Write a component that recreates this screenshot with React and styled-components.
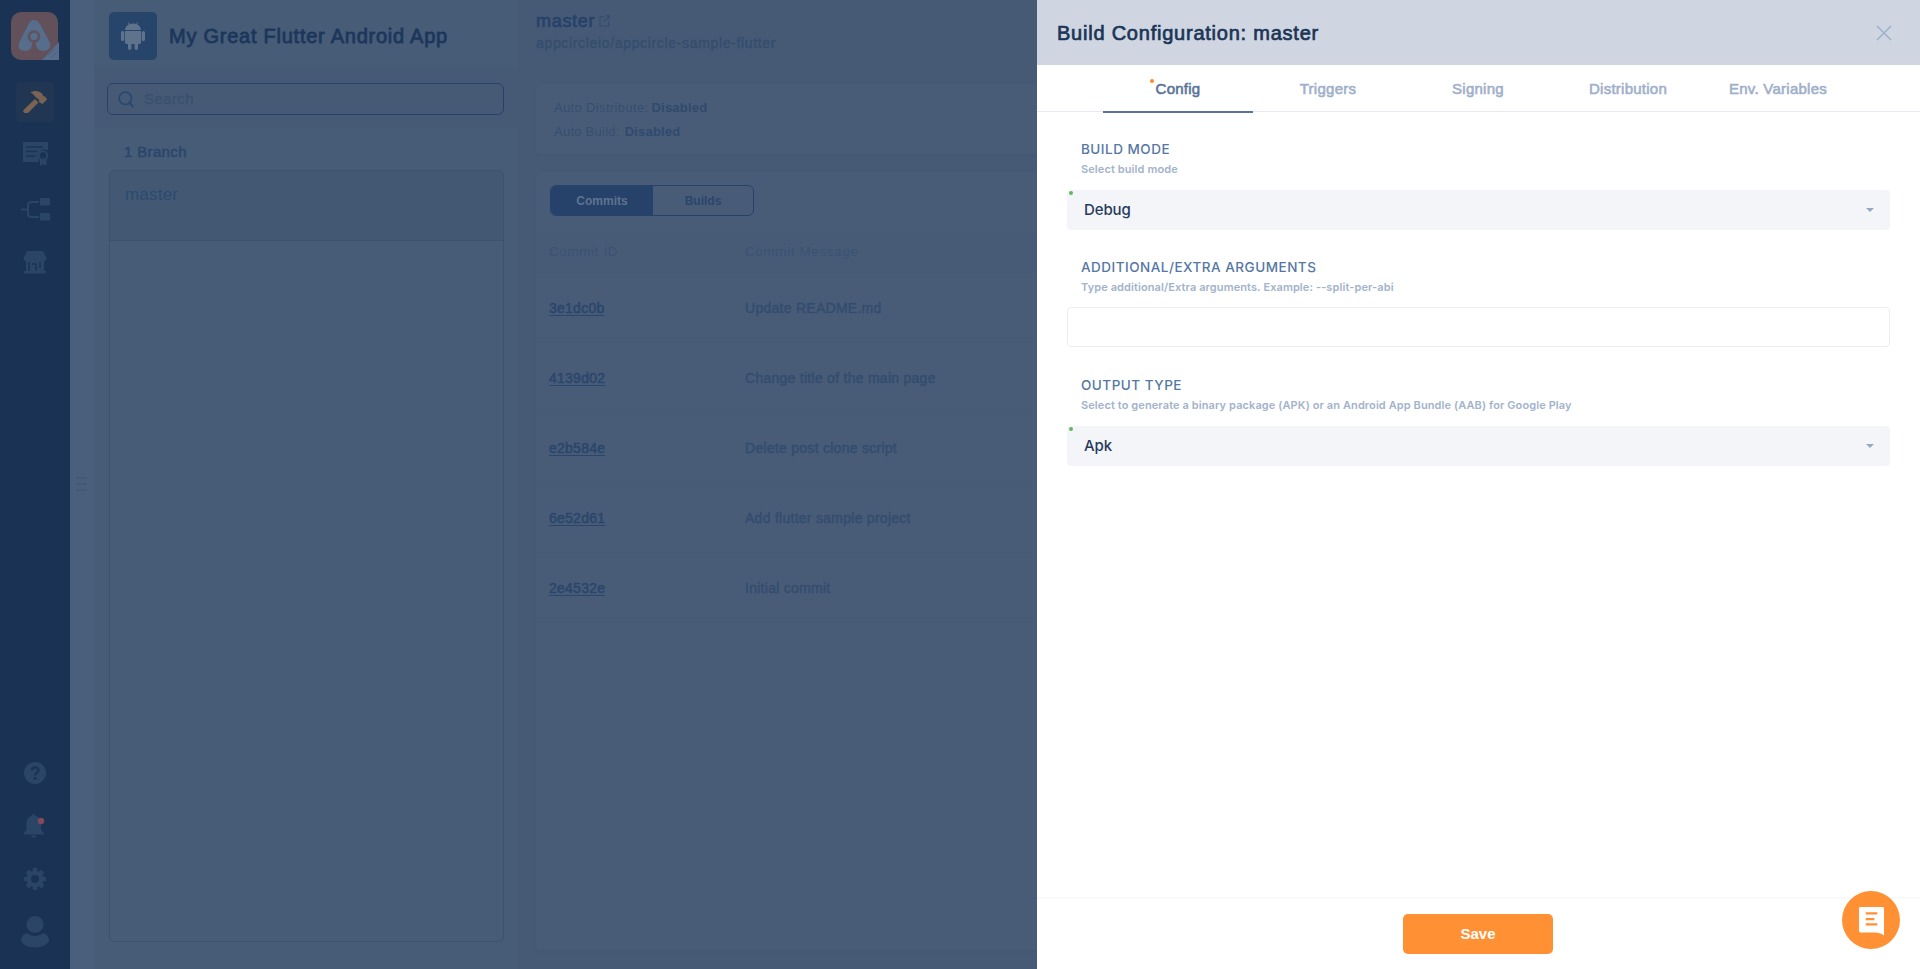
import React from "react";
import styled, { createGlobalStyle } from "styled-components";

const sans = `"Liberation Sans", Arial, sans-serif`;
const inter = `Inter, "Liberation Sans", sans-serif`;

const Global = createGlobalStyle`
  * { box-sizing: border-box; }
  body { margin: 0; overflow: hidden; font-family: ${sans}; background: #475b76; }
`;

const Page = styled.div`
  display: flex;
  width: 1920px;
  height: 969px;
  overflow: hidden;
`;

const Text = styled.span`
  font-family: ${(p) => p.$font || sans};
  font-size: ${(p) => p.$size}px;
  font-weight: ${(p) => p.$weight || 400};
  letter-spacing: ${(p) => p.$track || 0}px;
  color: ${(p) => p.$color};
  line-height: ${(p) => p.$line || 20}px;
  -webkit-text-stroke: ${(p) => p.$stroke || 0}px currentColor;
  white-space: nowrap;
`;

/* Sidebar */
const Sidebar = styled.nav`
  width: 70px;
  flex: none;
  display: flex;
  flex-direction: column;
  align-items: center;
  justify-content: space-between;
  padding: 12px 0 17px 2px;
  background: #1a3355;
  border-right: 2px solid #1c3052;
`;
const NavGroup = styled.div`
  display: flex;
  flex-direction: column;
  align-items: center;
`;
const NavItem = styled.div`
  display: flex;
  align-items: center;
  justify-content: center;
  width: 38px;
  height: ${(p) => p.$height || 40}px;
  margin-top: ${(p) => p.$gap || 0}px;
  border-radius: 4px;
  background: ${(p) => (p.$active ? "#203652" : "transparent")};
`;

const Gutter = styled.div`
  width: 24px;
  flex: none;
  display: flex;
  flex-direction: column;
  justify-content: center;
  align-items: center;
  gap: 4px;
  padding: 0 2px 2px 0;
  background: #4a5f7b;
`;
const Grip = styled.i`
  width: 11px;
  height: 2px;
  background: #445974;
`;

/* Branch panel */
const BranchPanel = styled.section`
  width: 425px;
  flex: none;
  display: flex;
  flex-direction: column;
  background: #475c77;
  box-shadow: inset -1px 0 0 #42577280;
`;
const AppHeader = styled.header`
  height: 68px;
  display: flex;
  align-items: center;
  gap: 12px;
  padding: 4px 15px 0;
`;
const AppIcon = styled.div`
  width: 48px;
  height: 48px;
  border-radius: 5px;
  display: flex;
  align-items: center;
  justify-content: center;
  background: #27456b;
`;
const SearchBand = styled.div`
  height: 60px;
  padding: 15px 15px 0 13px;
  background: #465a76;
`;
const SearchBox = styled.div`
  width: 397px;
  height: 32px;
  display: flex;
  align-items: center;
  gap: 10px;
  padding-left: 10px;
  border: 1px solid #26426a;
  border-radius: 6px;
`;
const BranchCount = styled.div`
  height: 42px;
  padding: 14px 0 0 30px;
`;
const BranchList = styled.div`
  width: 395px;
  height: 772px;
  margin-left: 15px;
  border: 1px solid #3d526e;
  border-radius: 5px;
  overflow: hidden;
`;
const BranchRow = styled.div`
  height: 70px;
  padding: 14px 15px;
  background: #435873;
  border-bottom: 1px solid #3c5270;
`;

/* Main area */
const Main = styled.main`
  width: 518px;
  flex: none;
  padding-left: 17px;
  background: #465a75;
`;
const RepoHeader = styled.header`
  height: 84px;
  display: flex;
  flex-direction: column;
  padding-top: 10px;
`;
const RepoTitle = styled.div`
  display: flex;
  align-items: center;
  gap: 4px;
  height: 22px;
`;
const Card = styled.div`
  height: ${(p) => p.$height}px;
  margin-bottom: 18px;
  background: #485c78;
  border-radius: 4px 0 0 4px;
  box-shadow: 0 1px 2px #42567160;
`;
const StatusList = styled.div`
  padding: 14px 18px;
  display: flex;
  flex-direction: column;
  gap: 4px;
`;
const StatusLine = styled.div`
  display: flex;
  height: 20px;
  gap: ${(p) => p.$gap}px;
`;
const ToggleBar = styled.div`
  height: 60px;
  padding: 13px 14px;
`;
const Toggle = styled.div`
  display: flex;
  width: 204px;
  height: 31px;
  border: 1px solid #26426a;
  border-radius: 6px;
  overflow: hidden;
`;
const ToggleItem = styled.div`
  flex: ${(p) => (p.$active ? "0 0 102px" : 1)};
  display: flex;
  align-items: center;
  justify-content: center;
  background: ${(p) => (p.$active ? "#26426a" : "transparent")};
`;
const TableRow = styled.div`
  display: grid;
  grid-template-columns: 196px 1fr;
  align-items: center;
  height: ${(p) => (p.$head ? 41 : 70)}px;
  padding-left: 13px;
  background: ${(p) => (p.$head ? "#475b77" : "transparent")};
  border-bottom: 1px solid #465a75;
`;
const CommitLink = styled(Text)`
  text-decoration: underline;
  text-decoration-thickness: 1px;
  text-underline-offset: 2px;
`;

/* Drawer */
const Drawer = styled.aside`
  width: 883px;
  flex: none;
  display: flex;
  flex-direction: column;
  background: #fff;
`;
const DrawerHeader = styled.header`
  height: 65px;
  flex: none;
  display: flex;
  align-items: center;
  justify-content: space-between;
  padding: 1px 28px 0 20px;
  background: #cfd6e2;
`;
const Tabs = styled.div`
  height: 47px;
  flex: none;
  display: flex;
  justify-content: center;
  padding-right: 1px;
  border-bottom: 1px solid #e7eaef;
`;
const Tab = styled.div`
  position: relative;
  width: 150px;
  height: 48px;
  display: flex;
  justify-content: center;
  padding-top: 14px;
  border-bottom: 2px solid ${(p) => (p.$active ? "#5a7499" : "transparent")};
`;
const Dot = styled.i`
  position: absolute;
  left: ${(p) => p.$left}px;
  top: ${(p) => p.$top}px;
  width: 4px;
  height: 4px;
  border-radius: 50%;
  background: ${(p) => p.$color};
`;
const Form = styled.div`
  flex: 1;
  padding: 27px 30px 0;
`;
const Field = styled.div`
  height: 118px;
`;
const FieldLabel = styled.div`
  display: flex;
  flex-direction: column;
  padding-left: 14px;
  height: 50px;
`;
const Control = styled.div`
  position: relative;
  height: 40px;
  margin-top: ${(p) => (p.$select ? 1 : 0)}px;
  display: flex;
  align-items: center;
  justify-content: space-between;
  padding: 0 16px 0 17px;
  border-radius: 4px;
  background: ${(p) => (p.$select ? "#f4f5f8" : "#fff")};
  border: ${(p) => (p.$select ? "0" : "1px solid #ebedf0")};
`;
const Footer = styled.footer`
  height: 72px;
  flex: none;
  display: flex;
  justify-content: center;
  padding: 15px 1px 0 0;
  border-top: 2px solid #f8f9fa;
`;
const SaveButton = styled.button`
  width: 150px;
  height: 40px;
  padding: 0;
  border: 0;
  border-radius: 5px;
  background: #ff9033;
`;
const ChatButton = styled.button`
  position: absolute;
  left: 1842px;
  top: 891px;
  width: 58px;
  height: 58px;
  padding: 2px 0 0;
  border: 0;
  border-radius: 50%;
  background: #ff9033;
  display: flex;
  align-items: center;
  justify-content: center;
`;

const nav = "#2b4567";
const mark = "#566e8b";
const tile = "#62505a";

const Logo = () => (
  <svg width="49" height="49" viewBox="0 0 49 49">
    <rect x="0" y="0" width="47" height="48" rx="10" fill={tile} />
    <path d="M31 48 48 30v18z" fill={mark} />
    <path d="m37 43 7-6M40 46l6-6" stroke="#4a6080" strokeWidth="1" />
    <path d="M23 8c3 0 5 2 6.500 5l9 17c2.500 5-1 9-6 9-3 0-5-1-6.500-3l-1.500-5h-3L20 36c-1.500 2-3.500 3-6 3-5 0-8-4-5.500-9l8.500-17c1.500-3 3-5 6-5z" fill={mark} />
    <circle cx="23" cy="24.500" r="5" fill={mark} stroke={tile} strokeWidth="2.600" />
    <path d="M23 29v11" stroke={tile} strokeWidth="2.600" />
  </svg>
);
const Hammer = () => (
  <svg width="26" height="24" viewBox="0 0 26 24">
    <path d="M2 19.500 13 9l3.500 3.500L6 23H2.500L1 21.500z" fill="#7b6354" />
    <path d="M8.500 2.500C12 .2 17 .5 20 3.500l1.500 3 1.500-.3 2 3.300-4.500 4.500-3.500-2 .2-2L13 6.500C12 4.500 10.500 3.500 8.500 2.500z" fill="#7b6354" />
  </svg>
);
const Certificate = () => (
  <svg width="27" height="26" viewBox="0 0 27 26">
    <path d="M1 1h25v8.500a6.500 6.500 0 0 0-9 9L16.500 21H1z" fill={nav} />
    <path d="M4 6h17M4 10.500h11M4 15h9" stroke="#1a3355" strokeWidth="1.500" />
    <circle cx="21" cy="14.500" r="4.200" fill="none" stroke={nav} strokeWidth="2" />
    <path d="M18 18v7l3-2 3.500 2v-7" fill={nav} />
  </svg>
);
const Flow = () => (
  <svg width="29" height="23" viewBox="0 0 29 23">
    <path d="M0 11.500h7M18 4h-8c-2 0-3 1-3 3v9c0 2 1 3 3 3h8" fill="none" stroke={nav} strokeWidth="2" />
    <rect x="19" y="0" width="10" height="7.500" fill={nav} />
    <rect x="19" y="15" width="10" height="7.500" fill={nav} />
  </svg>
);
const Store = () => (
  <svg width="24" height="23" viewBox="0 0 24 23">
    <path d="M4 0h16l3.500 7c0 2-1 3-2.500 3v10h2v2.500H1V20h2V10C1.500 10 .5 9 .5 7z" fill={nav} />
    <path d="M6 11v9M9 13h4v7M17 11v6" fill="none" stroke="#1a3355" strokeWidth="1.500" />
  </svg>
);
const Help = () => (
  <svg width="22" height="22" viewBox="0 0 22 22">
    <circle cx="11" cy="11" r="11" fill={nav} />
    <path d="M8 8.500c0-4 6.500-4 6.500-.3 0 2.500-3.300 2.500-3.300 5" fill="none" stroke="#1a3355" strokeWidth="2.200" />
    <circle cx="11.200" cy="16.500" r="1.400" fill="#1a3355" />
  </svg>
);
const Bell = () => (
  <svg width="22" height="24" viewBox="0 0 22 24">
    <path d="M9.500 0c1 0 1.500.7 1.500 1.700 4 1 6 4 6 7.300v7l3 3v1.500H0V19l2.500-3V9C2.500 5.500 4.500 2.700 8 1.700 8 .7 8.500 0 9.500 0zM7 21.500h5.500C12 24.500 7.500 24.500 7 21.500z" fill={nav} />
    <circle cx="17" cy="7" r="3.200" fill="#82495b" />
  </svg>
);
const Gear = () => (
  <svg width="22" height="22" viewBox="-11 -11 22 22">
    <g fill={nav}>
      {[0, 45, 90, 135].map((a) => (
        <rect key={a} x="-2.300" y="-11" width="4.600" height="22" rx="1" transform={`rotate(${a})`} />
      ))}
      <circle r="8.300" />
    </g>
    <circle r="4" fill="#1a3355" />
  </svg>
);
const Person = () => (
  <svg width="28" height="32" viewBox="0 0 28 32">
    <circle cx="14" cy="8.500" r="8.500" fill={nav} />
    <path d="M6 17c5 4 11 4 16 0 4 1.500 6 3.500 6 7-2 10-26 10-28 0 0-3.500 2-5.500 6-7z" fill={nav} />
  </svg>
);
const Android = () => (
  <svg width="26" height="28" viewBox="0 0 26 28">
    <g fill="#5f738d">
      <path d="M5 8c.3-3 2-4.800 4-5.800L7.800.5l.6-.4L9.800 2c2-.7 4.400-.7 6.400 0L17.600.1l.6.4L17 2.200c2 1 3.700 2.800 4 5.800z" />
      <path d="M5 9h16v11.500c0 .8-.7 1.500-1.500 1.500H18v4.300a1.700 1.700 0 0 1-3.400 0V22h-3.200v4.300a1.700 1.700 0 0 1-3.400 0V22H6.500C5.700 22 5 21.300 5 20.500z" />
      <rect x="1" y="9" width="3.300" height="10" rx="1.600" />
      <rect x="21.700" y="9" width="3.300" height="10" rx="1.600" />
    </g>
  </svg>
);
const SearchIcon = () => (
  <svg width="16" height="17" viewBox="0 0 16 17" fill="none" stroke="#2b486f" strokeWidth="1.900">
    <circle cx="7.300" cy="7.300" r="6.200" />
    <path d="m11.500 11.800 3.800 4.200" />
  </svg>
);
const External = () => (
  <svg width="11" height="12" viewBox="0 0 11 12" fill="none" stroke="#334d71" strokeWidth="1.100">
    <path d="M5 1.500H1v9.500h8.500V6.500M6.500.8h3.800v4M10 1 4.500 6.800" />
  </svg>
);
const Close = () => (
  <svg width="16" height="16" viewBox="0 0 16 16" stroke="#9db3cd" strokeWidth="1.600">
    <path d="m1 1 14 14M15 1 1 15" />
  </svg>
);
const Caret = () => (
  <svg width="8" height="4" viewBox="0 0 8 4">
    <path d="M0 0h8L4 4z" fill="#93a9c2" />
  </svg>
);
const Chat = () => (
  <svg width="25" height="29" viewBox="0 0 26 30">
    <path d="M1.500 0h23A1.500 1.500 0 0 1 26 1.500V29.500c-3-2-6-3-9-3H1.500A1.500 1.500 0 0 1 0 25V1.500A1.500 1.500 0 0 1 1.500 0z" fill="#fff" />
    <path d="M7 6.500h12M7 12.500h9M7 18h12" stroke="#ff9033" strokeWidth="2.200" />
  </svg>
);

const commits = [
  ["3e1dc0b", "Update README.md"],
  ["4139d02", "Change title of the main page"],
  ["e2b584e", "Delete post clone script"],
  ["6e52d61", "Add flutter sample project"],
  ["2e4532e", "Initial commit"],
];
const tabs = ["Config", "Triggers", "Signing", "Distribution", "Env. Variables"];
const fields = [
  { label: "BUILD MODE", hint: "Select build mode", value: "Debug" },
  { label: "ADDITIONAL/EXTRA ARGUMENTS", hint: "Type additional/Extra arguments. Example: --split-per-abi" },
  {
    label: "OUTPUT TYPE",
    hint: "Select to generate a binary package (APK) or an Android App Bundle (AAB) for Google Play",
    value: "Apk",
  },
];

export default function App() {
  return (
    <Page>
      <Global />
      <Sidebar>
        <NavGroup>
          <Logo />
          <NavItem $active $gap={21}><Hammer /></NavItem>
          <NavItem $gap={12}><Certificate /></NavItem>
          <NavItem $gap={15}><Flow /></NavItem>
          <NavItem $gap={13}><Store /></NavItem>
        </NavGroup>
        <NavGroup>
          <NavItem><Help /></NavItem>
          <NavItem $gap={13}><Bell /></NavItem>
          <NavItem $gap={13}><Gear /></NavItem>
          <NavItem $gap={13}><Person /></NavItem>
        </NavGroup>
      </Sidebar>
      <Gutter><Grip /><Grip /><Grip /></Gutter>

      <BranchPanel>
        <AppHeader>
          <AppIcon><Android /></AppIcon>
          <Text $size={20} $track={0.75} $stroke={0.8} $line={22} $color="#1d375c">My Great Flutter Android App</Text>
        </AppHeader>
        <SearchBand>
          <SearchBox>
            <SearchIcon />
            <Text $size={15} $track={0.4} $stroke={0.3} $color="#3a506e">Search</Text>
          </SearchBox>
        </SearchBand>
        <BranchCount>
          <Text $size={15} $track={0.35} $stroke={0.5} $color="#2b466c">1 Branch</Text>
        </BranchCount>
        <BranchList>
          <BranchRow>
            <Text $size={17} $track={0.2} $color="#2c4a72">master</Text>
          </BranchRow>
        </BranchList>
      </BranchPanel>

      <Main>
        <RepoHeader>
          <RepoTitle>
            <Text $size={18} $track={0.7} $stroke={0.7} $color="#27426a">master</Text>
            <External />
          </RepoTitle>
          <Text $size={14} $track={0.66} $stroke={0.5} $line={23} $color="#354e70">appcircleio/appcircle-sample-flutter</Text>
        </RepoHeader>
        <Card $height={70}>
          <StatusList>
            <StatusLine $gap={3}>
              <Text $size={13} $track={0.35} $color="#364f70">Auto Distribute:</Text>
              <Text $size={13} $track={0.2} $weight={700} $color="#304a6d">Disabled</Text>
            </StatusLine>
            <StatusLine $gap={5}>
              <Text $size={13} $track={0.25} $color="#364f70">Auto Build:</Text>
              <Text $size={13} $track={0.2} $weight={700} $color="#304a6d">Disabled</Text>
            </StatusLine>
          </StatusList>
        </Card>
        <Card $height={778}>
          <ToggleBar>
            <Toggle>
              <ToggleItem $active><Text $size={12} $weight={700} $track={0} $color="#5f738e">Commits</Text></ToggleItem>
              <ToggleItem><Text $size={12} $weight={700} $track={0} $color="#2b466c">Builds</Text></ToggleItem>
            </Toggle>
          </ToggleBar>
          <TableRow $head>
            <Text $size={13.5} $track={0.6} $color="#3c5272">Commit ID</Text>
            <Text $size={13.5} $track={0.6} $color="#3c5272">Commit Message</Text>
          </TableRow>
          {commits.map(([id, message]) => (
            <TableRow key={id}>
              <span><CommitLink $size={14} $track={0.25} $stroke={0.5} $color="#2b466c">{id}</CommitLink></span>
              <Text $size={14} $track={0.27} $stroke={0.5} $color="#344d6f">{message}</Text>
            </TableRow>
          ))}
        </Card>
      </Main>

      <Drawer>
        <DrawerHeader>
          <Text $size={20} $track={0.77} $stroke={0.7} $line={24} $color="#1b3556">Build Configuration: master</Text>
          <Close />
        </DrawerHeader>
        <Tabs>
          {tabs.map((name, i) => (
            <Tab key={name} $active={i === 0}>
              {i === 0 && <Dot $left={47} $top={14} $color="#ff8a2b" />}
              <Text $size={15} $track={0.25} $stroke={0.6} $color={i === 0 ? "#5a7499" : "#9fb0ca"}>{name}</Text>
            </Tab>
          ))}
        </Tabs>
        <Form>
          {fields.map((f) => (
            <Field key={f.label}>
              <FieldLabel>
                <Text $font={inter} $size={13.5} $weight={500} $track={0.5} $color="#5577a3">{f.label}</Text>
                <Text $font={inter} $size={11} $weight={600} $track={0.1} $color="#a3b3cb">{f.hint}</Text>
              </FieldLabel>
              <Control $select={!!f.value}>
                {f.value && (
                  <>
                    <Dot $left={2} $top={1} $color="#5fb85f" />
                    <Text $font={inter} $size={15} $weight={500} $track={-0.1} $color="#263b5c">{f.value}</Text>
                    <Caret />
                  </>
                )}
              </Control>
            </Field>
          ))}
        </Form>
        <Footer>
          <SaveButton><Text $size={15} $weight={700} $color="#fff">Save</Text></SaveButton>
        </Footer>
      </Drawer>
      <ChatButton aria-label="Open chat"><Chat /></ChatButton>
    </Page>
  );
}
